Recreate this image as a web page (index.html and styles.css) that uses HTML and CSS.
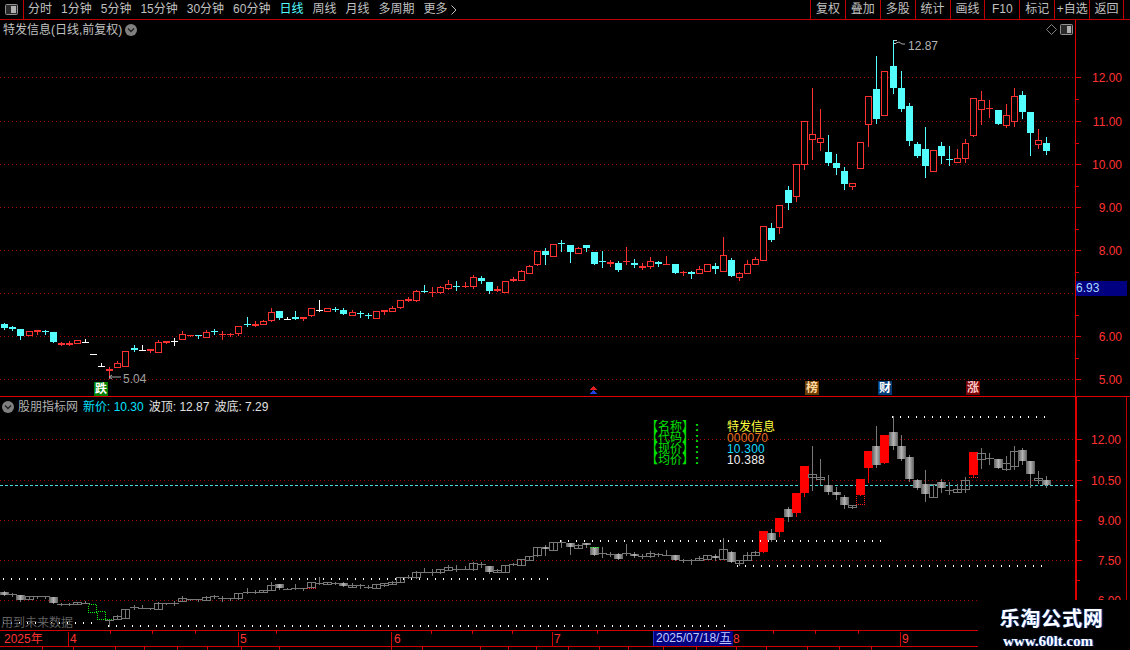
FILE: index.html
```html
<!DOCTYPE html>
<html lang="zh">
<head>
<meta charset="utf-8">
<title>特发信息 K线</title>
<link rel="stylesheet" href="styles.css">
</head>
<body>
<div class="app">
  <header class="toolbar">
    <div class="tool-toggle">
      <svg class="panel-icon" viewBox="0 0 13 11"><rect x="0.5" y="0.5" width="12" height="10" rx="1" class="pi-frame"/><rect x="6" y="2" width="5" height="7" class="pi-fill"/></svg>
    </div>
    <nav class="periods">
      <span>分时</span><span>1分钟</span><span>5分钟</span><span>15分钟</span><span>30分钟</span><span>60分钟</span>
      <span class="is-active">日线</span><span>周线</span><span>月线</span><span>多周期</span>
      <span class="more">更多<svg class="more-arrow" viewBox="0 0 6 10"><path d="M0.5 0.5 L5 5 L0.5 9.5"/></svg></span>
    </nav>
    <nav class="actions">
      <span>复权</span><span>叠加</span><span>多股</span><span>统计</span><span>画线</span><span>F10</span><span>标记</span><span>+自选</span><span>返回</span>
    </nav>
  </header>

  <section class="pane pane-main">
    <div class="plot">
      <svg id="mainChart" class="chart" viewBox="0 20 1075 376"></svg>
      <div class="pane-head head-main">
        <span>特发信息(日线,前复权)</span>
        <svg class="chev" viewBox="0 0 12 12"><circle cx="6" cy="6" r="6" class="chev-bg"/><path d="M3 4.5 L6 7.5 L9 4.5" class="chev-line"/></svg>
      </div>
      <div class="pane-tools">
        <svg class="diamond" viewBox="0 0 11 11"><path d="M5.5 0.5 L10.5 5.5 L5.5 10.5 L0.5 5.5 Z"/></svg>
        <svg class="panel-icon" viewBox="0 0 13 11"><rect x="0.5" y="0.5" width="12" height="10" rx="1" class="pi-frame"/><rect x="7" y="2" width="4" height="7" class="pi-fill"/></svg>
      </div>
      <span class="tag tag-high">12.87</span>
      <span class="tag tag-low">5.04</span>
      <span class="mark mark-die">跌</span>
      <span class="mark mark-bang">榜</span>
      <span class="mark mark-cai">财</span>
      <span class="mark mark-zhang">涨</span>
    </div>
    <div class="axis" id="mainAxis">
      <span class="last-price">6.93</span>
    </div>
  </section>

  <section class="pane pane-sub">
    <div class="plot">
      <svg id="subChart" class="chart" viewBox="0 397 1075 233"></svg>
      <div class="pane-head head-sub">
        <svg class="chev" viewBox="0 0 12 12"><circle cx="6" cy="6" r="6" class="chev-bg"/><path d="M3 4.5 L6 7.5 L9 4.5" class="chev-line"/></svg>
        <span class="ind-name">股朋指标网</span>
        <span class="ind-new">新价: 10.30</span>
        <span class="ind-val">波顶: 12.87</span>
        <span class="ind-val">波底: 7.29</span>
      </div>
      <div class="info">
        <span class="info-key">【名称】</span><span class="info-colon">:</span><span class="info-name">特发信息</span>
        <span class="info-key">【代码】</span><span class="info-colon">:</span><span class="info-code">000070</span>
        <span class="info-key">【现价】</span><span class="info-colon">:</span><span class="info-now">10.300</span>
        <span class="info-key">【均价】</span><span class="info-colon">:</span><span class="info-avg">10.388</span>
      </div>
      <span class="warn">用到未来数据</span>
    </div>
    <div class="axis axis-sub" id="subAxis"></div>
  </section>

  <footer class="timeline" id="timeline">
    <span class="t-label t-year">2025年</span>
    <span class="t-label t-4">4</span>
    <span class="t-label t-5">5</span>
    <span class="t-label t-6">6</span>
    <span class="t-label t-7">7</span>
    <span class="t-date">2025/07/18/<u>五</u></span>
    <span class="t-label t-8">8</span>
    <span class="t-label t-9">9</span>
  </footer>
  <div class="tabstrip" id="tabstrip"></div>

  <aside class="logo">
    <div class="logo-name">乐淘公式网</div>
    <div class="logo-url">www.60lt.com</div>
  </aside>
</div>
<script src="app.js"></script>
</body>
</html>
```

FILE: styles.css
```css
* { box-sizing: border-box; }
html, body { margin: 0; padding: 0; background: #000; }
body {
  width: 1130px;
  height: 650px;
  overflow: hidden;
  font: 12px/14px "Liberation Sans", "Noto Sans CJK SC", sans-serif;
  color: #c0c0c0;
}
.app { position: relative; width: 1130px; height: 650px; display: flex; flex-direction: column; }

.toolbar {
  flex: none;
  height: 20px;
  display: flex;
  border-bottom: 1px solid #c00000;
  line-height: 19px;
}
.tool-toggle {
  width: 24px;
  border-right: 1px solid #c00000;
  display: flex;
  align-items: center;
  justify-content: center;
}
.periods { display: flex; gap: 9px; padding-left: 4px; flex: none; }
.periods .is-active { color: #54ffff; }
.more { display: flex; align-items: center; gap: 3px; }
.more-arrow { width: 6px; height: 10px; fill: none; stroke: #c0c0c0; }
.actions { display: flex; margin-left: auto; margin-right: 6px; }
.actions span {
  width: 34.9px;
  text-align: center;
  border-left: 1px solid #c00000;
  white-space: nowrap;
}
.actions span:last-child { border-right: 1px solid #c00000; }

.panel-icon { width: 13px; height: 11px; display: block; }
.pi-frame { fill: #2a2a2a; stroke: #909090; }
.pi-fill { fill: #b0b0b0; }

.pane { display: flex; flex: none; }
.pane-main { height: 377px; border-bottom: 1px solid #e00000; }
.pane-sub { height: 233px; }
.plot { position: relative; width: 1075px; flex: none; }
.chart { position: absolute; left: 0; top: 0; width: 100%; height: 100%; display: block; shape-rendering: crispEdges; }

.axis {
  position: relative;
  width: 52px;
  flex: none;
  border-left: 1px solid #e00000;
}
.axis-sub { border-left-width: 2px; border-right: 1px solid #c00000; }
.ax-label {
  position: absolute;
  right: 5px;
  color: #ff3232;
  line-height: 14px;
  transform: translateY(-7px);
}
.ax-tick { position: absolute; left: 0; height: 1px; background: #e00000; }
.last-price {
  position: absolute;
  left: 0;
  right: 0;
  top: 261px;
  height: 15px;
  line-height: 14px;
  background: #000080;
  color: #a8d8ff;
  z-index: 1;
}

.pane-head { position: relative; display: flex; align-items: center; white-space: nowrap; }
.head-main { padding: 3px 0 0 3px; gap: 3px; }
.head-sub { padding: 2px 0 0 2px; height: 17px; }
.chev { width: 12px; height: 12px; flex: none; }
.chev-bg { fill: #808080; }
.chev-line { fill: none; stroke: #222; stroke-width: 1.4; shape-rendering: auto; }
.ind-name { margin-left: 4px; color: #b0b0b0; }
.ind-new { margin-left: 5px; color: #00e0ff; }
.ind-val { margin-left: 5px; color: #e0e0e0; }

.pane-tools { position: absolute; top: 4px; right: 2px; display: flex; gap: 3px; align-items: center; }
.diamond { width: 11px; height: 11px; fill: none; stroke: #808080; }

.tag { position: absolute; color: #b4b4b4; }
.tag-high { left: 908px; top: 19px; }
.tag-low { left: 123px; top: 352px; color: #a0a0a0; }

.mark {
  position: absolute;
  width: 14px;
  height: 14px;
  line-height: 14px;
  text-align: center;
  color: #fff;
  font-weight: 700;
}
.mark-die { left: 94px; top: 362px; background: #008000; }
.mark-bang { left: 805px; top: 361px; background: #6a3c00; color: #ffd9a0; }
.mark-cai { left: 878px; top: 361px; background: #003c78; }
.mark-zhang { left: 966px; top: 361px; background: #780000; color: #ffc8c8; }

.info {
  position: absolute;
  left: 646px;
  top: 25px;
  display: grid;
  grid-template-columns: 49px 32px auto;
  grid-auto-rows: 11px;
  line-height: 11px;
  white-space: nowrap;
}
.info-key { color: #00e000; }
.info-colon { color: #00ff00; font-weight: 700; }
.info-name { color: #ffff40; }
.info-code { color: #e87020; letter-spacing: .2px; }
.info-now { color: #10d8ff; letter-spacing: .2px; }
.info-avg { color: #f0f0f0; letter-spacing: .2px; }

.warn { position: absolute; left: 1px; top: 219px; color: #606060; }

.timeline {
  position: relative;
  flex: none;
  height: 17px;
  border-top: 1px solid #d00000;
  border-bottom: 1px solid #d00000;
}
.t-label { position: absolute; top: 1px; color: #ff3232; }
.t-year { left: 4px; }
.t-4 { left: 68px; border-left: 1px solid #d00000; padding-left: 1px; height: 14px; }
.t-5 { left: 238px; border-left: 1px solid #d00000; padding-left: 1px; height: 14px; }
.t-6 { left: 391px; border-left: 1px solid #d00000; padding-left: 2px; height: 14px; }
.t-7 { left: 552px; border-left: 1px solid #d00000; padding-left: 1px; height: 14px; }
.t-8 { left: 733px; }
.t-9 { left: 900px; border-left: 1px solid #d00000; padding-left: 1px; height: 14px; }
.t-date {
  position: absolute;
  left: 653px;
  top: 0;
  width: 80px;
  height: 15px;
  padding-left: 2px;
  background: #000080;
  border-left: 1px solid #2030c0;
  color: #c0c8ff;
  white-space: nowrap;
  z-index: 1;
}
.t-tick { position: absolute; top: 0; width: 1px; height: 3px; background: #d00000; }

.tabstrip { position: relative; flex: 1; overflow: hidden; }
.tab-sep { position: absolute; top: 0; width: 1px; height: 3px; background: #d00000; }

.logo {
  position: absolute;
  left: 978px;
  top: 600px;
  width: 152px;
  height: 50px;
  background: #000;
  padding-top: 7px;
  text-align: center;
  color: #fff;
  text-shadow: 1px 0 1px #3060c0;
}
.logo-name {
  font: 700 20px/22px "Noto Sans CJK SC", sans-serif;
  letter-spacing: .8px;
  margin-left: -5px;
}
.logo-url {
  font: 700 15px/16px "Liberation Serif", serif;
  margin: 4px 0 0 -12px;
}

/* chart parts */
.grid-dot { fill: #a00000; }
.avg-dash { fill: #48d8d8; }
.level-dot { fill: #fff; }
.note-line { stroke: #a8a8a8; fill: none; shape-rendering: auto; }
.note-head { stroke: #c8c8c8; fill: none; }
.k-cyan { fill: #54ffff; }
.k-red { fill: #ff3232; }
.k-white { fill: #fff; }
.k-hollow { fill: #000; stroke: #ff3232; stroke-width: 1; }
.s-wick { fill: #787878; }
.s-fill { fill: url(#silver); }
.s-hollow { fill: none; stroke: #787878; stroke-width: 1; }
.s-flat { fill: #787878; }
.s-red { fill: #ff0000; }
.dot-red { fill: none; stroke: #ff2020; stroke-dasharray: 1 1; }
.dot-green { fill: none; stroke: #10f010; stroke-dasharray: 1 1; }
.tri-red { fill: #e02020; }
.tri-blue { fill: #2040e0; }
```

FILE: app.js
```js
(function () {
  // kind, high, body top, body bottom, low (screen y of the main pane)
  var D = [
    ['c',323,324,328,329],['c',326,327,329,330],['c',329,329,336,339],['r',331,331,335,335],
    ['r',330,330,332,334],['c',330,331,332,334],['c',332,332,342,342],['r',342,343,345,345],
    ['r',341,343,345,345],['r',340,340,343,343],['w',339,342,342,342],['w',354,354,354,354],
    ['w',363,366,366,366],['r',367,369,371,378],['r',361,363,367,367],['r',351,351,366,366],
    ['c',345,348,350,351],['w',345,350,350,350],['r',349,349,351,352],['r',340,342,352,352],
    ['r',341,341,343,343],['w',338,341,341,345],['r',331,334,339,339],['r',335,335,336,336],
    ['c',335,335,336,338],['r',330,332,337,337],['c',329,331,331,334],['r',331,334,335,339],
    ['r',333,334,335,336],['r',326,326,333,335],['c',317,324,324,326],['r',321,324,326,326],
    ['r',320,321,324,324],['r',308,312,320,321],['c',311,311,318,319],['w',317,319,319,319],
    ['c',311,317,319,319],['r',317,317,319,320],['r',308,308,315,316],['w',300,310,310,311],
    ['r',308,308,311,311],['c',307,309,309,311],['c',308,310,314,314],['r',310,312,315,315],
    ['c',311,313,314,317],['c',313,315,316,318],['r',311,311,318,318],['r',310,310,312,314],
    ['r',306,308,311,311],['r',300,300,307,308],['r',297,299,301,301],['r',290,291,300,301],
    ['c',285,291,291,292],['r',287,292,292,296],['r',286,287,292,293],['r',280,284,288,289],
    ['c',281,286,286,290],['r',282,286,287,287],['r',275,277,286,288],['c',276,278,281,283],
    ['c',282,282,291,293],['r',286,289,291,291],['r',281,281,292,292],['r',277,279,281,281],
    ['r',270,271,280,280],['r',265,266,273,273],['r',251,251,264,265],['c',248,251,255,264],
    ['r',244,244,256,256],['c',240,243,243,251],['c',245,245,252,262],['r',247,248,253,253],
    ['c',245,245,248,251],['c',252,252,264,264],['c',251,261,261,267],['r',260,262,264,266],
    ['c',261,263,270,271],['r',247,261,261,264],['c',259,263,265,267],['r',263,266,268,269],
    ['r',257,261,266,268],['c',261,262,264,266],['r',256,264,264,264],['c',264,264,273,273],
    ['r',271,272,273,275],['c',271,272,274,278],['r',266,269,273,273],['r',264,264,271,271],
    ['c',263,266,269,273],['r',237,255,271,271],['c',258,260,276,276],['r',272,273,277,280],
    ['r',260,264,273,273],['r',257,259,264,264],['r',226,226,260,260],['c',223,228,240,241],
    ['r',205,205,227,233],['c',186,190,203,209],['r',164,164,196,201],['r',121,121,164,169],
    ['r',88,134,139,159],['r',109,138,142,150],['c',135,152,163,165],['c',154,163,168,174],
    ['c',167,171,184,189],['r',183,183,186,189],['r',142,142,168,168],['r',96,96,124,146],
    ['c',56,89,119,123],['r',71,71,115,115],['c',40,66,88,93],['c',71,88,109,111],
    ['c',103,106,141,145],['c',142,144,156,157],['c',127,149,166,177],['r',150,150,171,171],
    ['c',142,146,156,163],['c',146,159,159,165],['r',149,158,162,162],['r',139,143,158,162],
    ['r',98,98,135,136],['r',91,100,109,124],['r',100,108,108,117],['c',110,110,124,124],
    ['r',104,115,125,127],['r',88,96,121,126],['c',91,95,112,118],['c',112,112,133,155],
    ['r',129,140,144,148],['c',137,143,151,154]
  ];
  var SOLID = [94, 96, 98, 99, 106, 107, 109, 120];
  var SKIP_SUB = [11, 12];

  function cx(i) { return Math.round(4.3 + 8.075 * i); }
  function sy(y) { return Math.round(416 + (y - 40) * 0.62); }
  function rect(x, y, w, h, cls) {
    return '<rect x="' + x + '" y="' + y + '" width="' + w + '" height="' + Math.max(h, 1) + '" class="' + cls + '"/>';
  }
  // a row of small squares, drawn as one path so each dot lands on whole pixels
  function row(y, a, b, step, w, h, cls) {
    var d = '';
    for (var x = a; x < b; x += step) d += 'M' + x + ' ' + y + 'h' + w + 'v' + h + 'h-' + w + 'z';
    return '<path d="' + d + '" class="' + cls + '"/>';
  }
  function dots(y, a, b) { return row(y, a, b, 8, 1, 2, 'level-dot'); }
  function grid(ys) {
    return ys.map(function (y) { return row(y, 0, 1075, 4, 1, 1, 'grid-dot'); }).join('');
  }

  // main pane
  var mainYs = [77, 121, 164, 207, 250, 293, 336, 379];
  var m = grid(mainYs);
  D.forEach(function (d, i) {
    var x = cx(i), k = d[0];
    var fill = k === 'c' ? 'k-cyan' : k === 'w' ? 'k-white' : 'k-red';
    m += rect(x, d[1], 1, d[4] - d[1] + 1, fill);
    if (k === 'r' && d[3] - d[2] > 2) {
      m += rect(x - 2.5, d[2] + 0.5, 6, d[3] - d[2], 'k-hollow');
    } else {
      m += rect(x - 3, d[2], 7, d[3] - d[2], fill);
    }
  });
  m += '<path class="note-head" d="M893.5 40 H897 M893.5 43.5 H896"/>';
  m += '<path class="note-line" d="M896 43 L899 42 L902 44 H905"/>';
  m += '<path class="note-line" d="M109 377 L112 375 M109 377 L112 379 M109 377 H121"/>';
  m += '<polygon class="tri-red" points="593,386 589,390 597,390"/>';
  m += '<polygon class="tri-blue" points="593,390 589,394 597,394"/>';
  document.getElementById('mainChart').innerHTML = m;

  // indicator pane
  var subYs = [439, 480, 520, 560, 600];
  var s = '<defs><linearGradient id="silver"><stop offset="0" stop-color="#606060"/><stop offset=".5" stop-color="#b4b4b4"/><stop offset="1" stop-color="#606060"/></linearGradient></defs>';
  s += grid(subYs);
  s += row(485, 0, 1075, 5, 3, 1, 'avg-dash');
  D.forEach(function (d, i) {
    if (SKIP_SUB.indexOf(i) >= 0) return;
    var x = cx(i), k = d[0], t = sy(d[2]), b = sy(d[3]);
    var solid = SOLID.indexOf(i) >= 0;
    s += rect(x, sy(d[1]), 1, sy(d[4]) - sy(d[1]) + 1, solid ? 's-red' : 's-wick');
    if (solid) s += rect(x - 4, t, 9, b - t, 's-red');
    else if (b - t <= 1) s += rect(x - 4, t, 9, 1, 's-flat');
    else if (k === 'r') s += rect(x - 3.5, t + 0.5, 8, b - t, 's-hollow');
    else s += rect(x - 4, t, 9, b - t, 's-fill');
  });
  s += dots(416, 892, 1047) + dots(540, 560, 887) + dots(565, 737, 1047) + dots(578, 3, 554);
  s += dots(622, 3, 92) + dots(625, 108, 731);
  s += '<path class="dot-red" d="M856.5 496 V504.5 H864.5 V496"/>';
  s += '<path class="dot-red" d="M969 477.5 H978"/>';
  s += '<path class="dot-red" d="M307 588.5 H316"/>';
  s += '<path class="dot-green" d="M590 547.5 H599"/>';
  s += '<rect class="dot-green" x="88.5" y="604.5" width="8" height="8"/>';
  s += '<rect class="dot-green" x="97.5" y="611.5" width="8" height="8"/>';
  s += '<path class="dot-green" d="M107 619.5 H113"/>';
  document.getElementById('subChart').innerHTML = s;

  // price scales
  function tick(box, y, w, top) {
    var t = document.createElement('i');
    t.className = 'ax-tick';
    t.style.top = (y - top) + 'px';
    t.style.width = w + 'px';
    box.appendChild(t);
  }
  function label(box, y, text, top) {
    var l = document.createElement('span');
    l.className = 'ax-label';
    l.style.top = (y - top + 0.5) + 'px';
    l.textContent = text;
    box.appendChild(l);
  }
  var mainBox = document.getElementById('mainAxis');
  mainYs.forEach(function (y, i) {
    tick(mainBox, y, 5, 20);
    if (i < mainYs.length - 1) tick(mainBox, Math.round((y + mainYs[i + 1]) / 2), 3, 20);
  });
  [['12.00',77],['11.00',121],['10.00',164],['9.00',207],['8.00',250],['6.00',336],['5.00',379]]
    .forEach(function (p) { label(mainBox, p[1], p[0], 20); });
  var subBox = document.getElementById('subAxis');
  subYs.forEach(function (y, i) {
    tick(subBox, y, 5, 397);
    if (i < subYs.length - 1) tick(subBox, Math.round((y + subYs[i + 1]) / 2), 3, 397);
  });
  [['12.00',439],['10.50',480],['9.00',520],['7.50',560],['6.00',600]]
    .forEach(function (p) { label(subBox, p[1], p[0], 397); });

  // time scale ticks and the clipped tab strip below it
  var tl = document.getElementById('timeline');
  [110,152,195,276,431,472,512,597,773,815,858].forEach(function (x) {
    var t = document.createElement('i');
    t.className = 't-tick';
    t.style.left = x + 'px';
    tl.appendChild(t);
  });
  var strip = document.getElementById('tabstrip');
  [42,73,115,144,177,207,241,279,391,422,480,508,536,568,599,628,663,696,736,766,807,839,871].forEach(function (x) {
    var t = document.createElement('i');
    t.className = 'tab-sep';
    t.style.left = x + 'px';
    strip.appendChild(t);
  });
})();
```
